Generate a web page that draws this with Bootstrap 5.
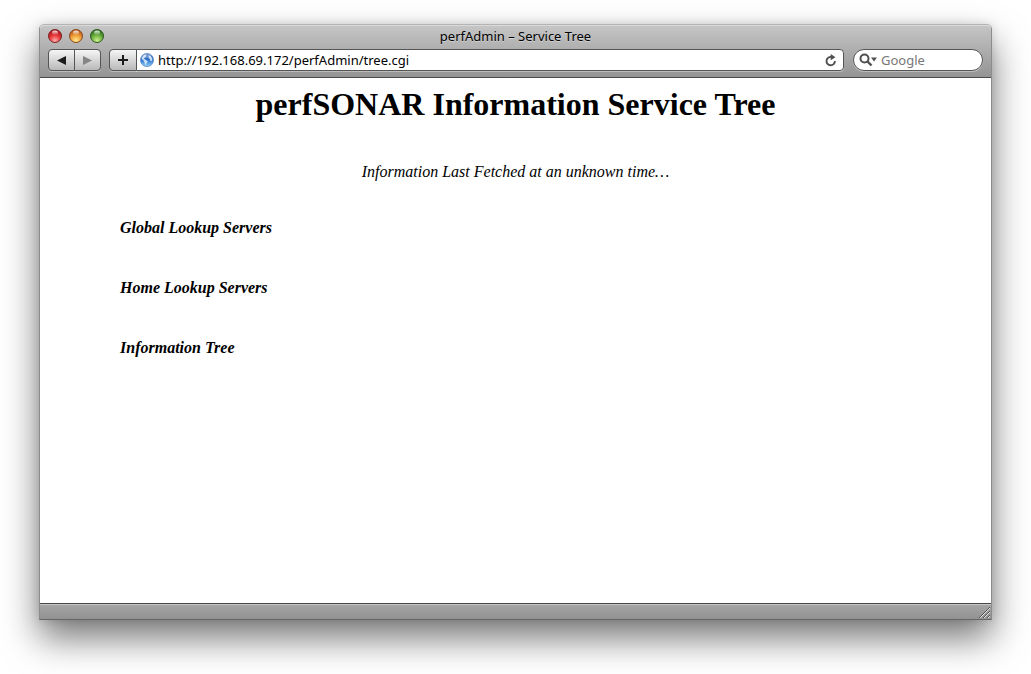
<!DOCTYPE html>
<html lang="en">
<head>
<meta charset="utf-8">
<meta name="viewport" content="width=device-width, initial-scale=1">
<title>perfAdmin – Service Tree</title>
<link href="https://cdn.jsdelivr.net/npm/bootstrap@5.3.0/dist/css/bootstrap.min.css" rel="stylesheet">
<style>
  body { background: #fff; color: #000; font-family: "Noto Sans", sans-serif; font-size: 13px; }
  .desktop { padding: 24px 39px 54px; }
  .window { border: 1px solid #8c8c8c; border-top-color: #b4b4b4; border-bottom-color: #666; border-radius: 5px 5px 0 0; box-shadow: 0 18px 36px rgba(0,0,0,.54), 0 0 10px rgba(0,0,0,.12); }
  .chrome { background: linear-gradient(#c6c6c6, #949494); border-bottom: 1px solid #4c4c4c; border-radius: 4px 4px 0 0; box-shadow: inset 0 1px #dadada; }
  .title-row { height: 22px; padding: 0 8px; }
  .title-row h2 { font-size: 13px; line-height: 20px; text-shadow: 0 1px rgba(255,255,255,.4); }
  .lights { width: 58px; gap: 7px; }
  .light { width: 14px; height: 14px; border: 0; padding: 0; background: none; line-height: 0; }
  .light svg { display: block; }
  .tool-row { height: 30px; padding: 2px 8px 0; }
  .tool { height: 22px; padding: 0; border: 1px solid #555; background: linear-gradient(#f6f6f6, #b9b9b9); box-shadow: 0 1px rgba(255,255,255,.35); line-height: 0; }
  .nav-btn { width: 27px; }
  .nav-btn + .nav-btn { margin-left: -1px; }
  .tool:first-child { border-radius: 4px 0 0 4px; }
  .nav-btn:last-child { border-radius: 0 4px 4px 0; }
  .plus { width: 28px; }
  .field { height: 22px; background: #fff; border: 1px solid #555; box-shadow: 0 1px rgba(255,255,255,.35); }
  .address { margin-left: -1px; border-radius: 0 4px 4px 0; padding: 0 6px 0 3px; }
  .field input { min-width: 0; border: 0; padding: 0; outline: 0; background: none; color: #000; font-size: 13px; line-height: 20px; height: 20px; }
  .reload { border: 0; padding: 0; background: none; line-height: 0; }
  .search { width: 130px; margin: 0 0 0 9px; border-radius: 11px; padding: 0 10px 0 5px; }
  .search input::placeholder { color: #777; opacity: 1; }
  .page { background: #fff; font-family: "Liberation Serif", serif; font-size: 16px; line-height: 18px; padding: 8px; }
  .page h1 { font-size: 32px; line-height: 37px; font-weight: 700; }
  .fetched { margin: 40px 0 0; }
  .sections { padding: 38px 72px 0; gap: 42px; }
  .sections h3 { font-size: 16px; line-height: 18px; font-weight: 700; }
  .status { height: 16px; border-top: 1px solid #444; background: linear-gradient(#a6a6a6, #929292); box-shadow: inset 0 1px #c8c8c8; }
</style>
</head>
<body>
<div class="desktop d-flex flex-column min-vh-100">
  <div class="window d-flex flex-column flex-grow-1">
    <header class="chrome">
      <div class="title-row d-flex align-items-center">
        <div class="lights d-flex">
          <button class="light" aria-label="Close"><svg width="14" height="14" viewBox="0 0 14 14">
            <defs>
              <radialGradient id="red" cx=".5" cy=".85" r=".8"><stop offset="0" stop-color="#ffb0ac"/><stop offset=".5" stop-color="#ea3a3d"/><stop offset="1" stop-color="#a8131b"/></radialGradient>
              <radialGradient id="amber" cx=".5" cy=".85" r=".8"><stop offset="0" stop-color="#ffec91"/><stop offset=".5" stop-color="#f0a23c"/><stop offset="1" stop-color="#b65112"/></radialGradient>
              <radialGradient id="green" cx=".5" cy=".85" r=".8"><stop offset="0" stop-color="#d0f291"/><stop offset=".5" stop-color="#72b443"/><stop offset="1" stop-color="#286c18"/></radialGradient>
              <linearGradient id="gloss" x2="0" y2="1"><stop offset="0" stop-color="#fff" stop-opacity=".9"/><stop offset="1" stop-color="#fff" stop-opacity=".15"/></linearGradient>
            </defs>
            <circle cx="7" cy="7" r="6.5" fill="url(#red)" stroke="#7d2526"/><ellipse cx="7" cy="3.4" rx="3" ry="2" fill="url(#gloss)"/></svg></button>
          <button class="light" aria-label="Minimize"><svg width="14" height="14" viewBox="0 0 14 14"><circle cx="7" cy="7" r="6.5" fill="url(#amber)" stroke="#8a4a20"/><ellipse cx="7" cy="3.4" rx="3" ry="2" fill="url(#gloss)"/></svg></button>
          <button class="light" aria-label="Zoom"><svg width="14" height="14" viewBox="0 0 14 14"><circle cx="7" cy="7" r="6.5" fill="url(#green)" stroke="#2f5c20"/><ellipse cx="7" cy="3.4" rx="3" ry="2" fill="url(#gloss)"/></svg></button>
        </div>
        <h2 class="flex-grow-1 text-center fw-normal mb-0">perfAdmin – Service Tree</h2>
        <div class="lights"></div>
      </div>
      <div class="tool-row d-flex align-items-start">
        <div class="d-flex me-2">
          <button class="tool nav-btn" aria-label="Back"><svg width="9" height="9" viewBox="0 0 9 9"><path d="M0 4.5L9 0v9z" fill="#1c1c1c"/></svg></button>
          <button class="tool nav-btn" aria-label="Forward"><svg width="9" height="9" viewBox="0 0 9 9"><path d="M9 4.5L0 0v9z" fill="#858585"/></svg></button>
        </div>
        <div class="d-flex flex-grow-1">
          <button class="tool plus" aria-label="Add bookmark"><svg width="10" height="10" viewBox="0 0 10 10"><path d="M5 0v10M0 5h10" stroke="#1c1c1c" stroke-width="2"/></svg></button>
          <div class="field address d-flex align-items-center flex-grow-1">
            <svg class="flex-shrink-0 me-1" width="14" height="14" viewBox="0 0 14 14" aria-hidden="true">
              <defs><linearGradient id="sea" x2="0" y2="1"><stop offset="0" stop-color="#2a5cab"/><stop offset=".5" stop-color="#2f78cf"/><stop offset="1" stop-color="#8fd0fa"/></linearGradient></defs>
              <circle cx="7" cy="7" r="6.6" fill="url(#sea)" stroke="#6f93c6" stroke-width=".8"/>
              <path d="M1.500 4.500L4 2l2.500-.5-.3 1.800L5 4.500 3.800 5.800l2.700 1.400 1.200 1.300-1.200 1.800-.7 2-1.300-2.300-.6-2.200L2 6.300zM8.500 2.500l2 .3 1.800 2.500-.3 2.500-1.300.5-.7-1.800-1.300-1.700z" fill="#e3effb" fill-opacity=".85"/>
              <ellipse cx="7" cy="2.800" rx="4.200" ry="2" fill="#fff" fill-opacity=".3"/>
            </svg>
            <input class="flex-grow-1" type="text" aria-label="Address" value="http://192.168.69.172/perfAdmin/tree.cgi">
            <button class="reload" aria-label="Reload"><svg width="12" height="13" viewBox="0 0 12 13"><path d="M9.900 7A4.200 4.200 0 1 1 6.500 3" fill="none" stroke="#505050" stroke-width="1.900"/><path d="M5.700 0l4.800 3.200-4.800 3z" fill="#505050"/></svg></button>
          </div>
        </div>
        <form class="field search d-flex align-items-center">
          <svg class="flex-shrink-0 me-1" width="18" height="14" viewBox="0 0 18 14" aria-hidden="true"><circle cx="5.500" cy="5.500" r="4" fill="none" stroke="#505050" stroke-width="2"/><path d="M8.500 8.500l4 4" stroke="#505050" stroke-width="2.400"/><path d="M12 4.500h6L15 8.500z" fill="#505050"/></svg>
          <input class="w-100" type="text" aria-label="Search" placeholder="Google">
        </form>
      </div>
    </header>
    <main class="page flex-grow-1">
      <h1 class="text-center mb-0">perfSONAR Information Service Tree</h1>
      <p class="fetched text-center fst-italic">Information Last Fetched at an unknown time…</p>
      <div class="sections d-flex flex-column">
        <h3 class="fst-italic mb-0">Global Lookup Servers</h3>
        <h3 class="fst-italic mb-0">Home Lookup Servers</h3>
        <h3 class="fst-italic mb-0">Information Tree</h3>
      </div>
    </main>
    <footer class="status d-flex justify-content-end align-items-end">
      <svg width="13" height="13" viewBox="0 0 13 13" aria-hidden="true"><path d="M1 12L12 1M5 12l7-7M9 12l3-3" stroke="#555"/><path d="M2 12L12 2M6 12l6-6M10 12l2-2" stroke="#ddd"/></svg>
    </footer>
  </div>
</div>
<script src="https://cdn.jsdelivr.net/npm/bootstrap@5.3.0/dist/js/bootstrap.bundle.min.js"></script>
</body>
</html>
